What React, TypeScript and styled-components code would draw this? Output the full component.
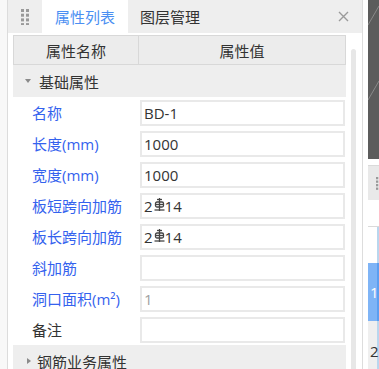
import React from 'react';
import styled, { createGlobalStyle } from 'styled-components';

const GlobalStyle = createGlobalStyle`
  html, body {
    margin: 0;
    padding: 0;
    background: #fff;
  }
  body {
    font-family: "Open Sans", "Noto Sans CJK SC", sans-serif;
  }
`;

const props = [
  { label: '名称', value: 'BD-1' },
  { label: '长度(mm)', value: '1000' },
  { label: '宽度(mm)', value: '1000' },
  { label: '板短跨向加筋', value: '2|14', rebar: true },
  { label: '板长跨向加筋', value: '2|14', rebar: true },
  { label: '斜加筋', value: '' },
  { label: '洞口面积(m²)', value: '1', disabled: true },
  { label: '备注', value: '', plain: true },
];

const GripDots = ({ cols = 2 }: { cols?: number }) => (
  <svg width={cols * 4} height="16" viewBox={`0 0 ${cols * 4} 16`}>
    {Array.from({ length: 4 }).map((_, r) =>
      Array.from({ length: cols }).map((__, c) => (
        <rect key={`${r}-${c}`} x={c * 5} y={r * 4.7} width="3" height="3" fill="#999" />
      ))
    )}
  </svg>
);

// HRB400 rebar symbol
const RebarMark = () => (
  <svg width="11" height="13" viewBox="0 0 11 13" style={{ margin: '0 0 2px 1px' }}>
    <g stroke="#444" strokeWidth="1.3" fill="none">
      <line x1="5.5" y1="0" x2="5.5" y2="13" />
      <line x1="3" y1="1.5" x2="8" y2="1.5" />
      <rect x="1.5" y="4" width="8" height="5" rx="1.5" />
      <line x1="1.5" y1="6.5" x2="9.5" y2="6.5" />
      <line x1="0.5" y1="12" x2="10.5" y2="12" />
    </g>
  </svg>
);

export default function App() {
  return (
    <>
      <GlobalStyle />
      <Screen>
        <LeftRail />
        <Panel>
          <TabBar>
            <Grip>
              <GripDots />
            </Grip>
            <Tab $active>属性列表</Tab>
            <Tab>图层管理</Tab>
            <CloseButton>
              <svg width="11" height="11" viewBox="0 0 11 11">
                <path d="M1 1 L10 10 M10 1 L1 10" stroke="#9a9a9a" strokeWidth="1.4" />
              </svg>
            </CloseButton>
          </TabBar>
          <Body>
            <Table>
              <HeaderRow>
                <HeaderCell>属性名称</HeaderCell>
                <HeaderCell>属性值</HeaderCell>
              </HeaderRow>
              <GroupRow>
                <Caret $open />
                基础属性
              </GroupRow>
              {props.map((p) => (
                <PropRow key={p.label}>
                  <PropLabel $plain={p.plain}>{p.label}</PropLabel>
                  <ValueBox $disabled={p.disabled}>
                    {p.rebar ? (
                      <>
                        2<RebarMark />14
                      </>
                    ) : (
                      p.value
                    )}
                  </ValueBox>
                </PropRow>
              ))}
              <GroupRow>
                <Caret />
                钢筋业务属性
              </GroupRow>
            </Table>
            <ScrollColumn>
              <ScrollTrack />
            </ScrollColumn>
          </Body>
        </Panel>
        <RightPane>
          <DarkCanvas>
            <svg width="11" height="159" viewBox="0 0 11 159">
              <line x1="0" y1="25" x2="11" y2="6" stroke="#8a8a8a" strokeWidth="1" />
              <line x1="0" y1="100" x2="11" y2="81" stroke="#8a8a8a" strokeWidth="1" />
            </svg>
          </DarkCanvas>
          <SubHeader>
            <GripDots cols={1} />
          </SubHeader>
          <SubBlank />
          <GridCell />
          <GridCell $selected>1</GridCell>
          <GridCell $grey>2</GridCell>
        </RightPane>
      </Screen>
    </>
  );
}

const Screen = styled.div`
  display: flex;
  width: 379px;
  height: 369px;
  overflow: hidden;
  background: #fff;
`;

const LeftRail = styled.div`
  width: 7px;
  border-right: 1px solid #dcdcdc;
  background: #f8f8f8;
`;

const Panel = styled.div`
  width: 354px;
  display: flex;
  flex-direction: column;
  border-right: 1px solid #dddddd;
  margin-right: 5px;
`;

const TabBar = styled.div`
  height: 33px;
  display: flex;
  align-items: stretch;
  background: #eeeeee;
  flex-shrink: 0;
`;

const Grip = styled.div`
  width: 34px;
  display: flex;
  align-items: center;
  padding-left: 13px;
  box-sizing: border-box;
`;

const Tab = styled.div<{ $active?: boolean }>`
  display: flex;
  align-items: center;
  justify-content: center;
  padding: 0 12px;
  min-width: ${(p) => (p.$active ? '86px' : 'auto')};
  box-sizing: border-box;
  font-size: 15px;
  color: ${(p) => (p.$active ? '#4b8ff2' : '#333')};
  background: ${(p) => (p.$active ? '#fff' : 'transparent')};
  margin-right: ${(p) => (p.$active ? '0' : '0')};
`;

const CloseButton = styled.div`
  margin-left: auto;
  width: 38px;
  display: flex;
  align-items: center;
  justify-content: center;
`;

const Body = styled.div`
  flex: 1;
  display: flex;
  padding: 2px 0 0 5px;
  min-height: 0;
`;

const Table = styled.div`
  width: 333px;
  display: flex;
  flex-direction: column;
`;

const HeaderRow = styled.div`
  display: grid;
  grid-template-columns: 126px 207px;
  height: 30px;
  flex-shrink: 0;
`;

const HeaderCell = styled.div`
  display: flex;
  align-items: center;
  justify-content: center;
  background: #ececec;
  border: 1px solid #d8d8d8;
  border-left: none;
  font-size: 15px;
  color: #333;
  box-sizing: border-box;
  &:first-child {
    border-left: 1px solid #d8d8d8;
    border-right: 1px solid #d8d8d8;
  }
  &:last-child {
    border-left: none;
  }
`;

const GroupRow = styled.div`
  height: 32px;
  display: flex;
  align-items: center;
  gap: 8px;
  padding-left: 12px;
  background: #eeeeee;
  font-size: 15px;
  color: #333;
  flex-shrink: 0;
`;

const Caret = styled.span<{ $open?: boolean }>`
  width: 0;
  height: 0;
  ${(p) =>
    p.$open
      ? `border-left: 3px solid transparent;
         border-right: 3px solid transparent;
         border-top: 4px solid #8a8a8a;`
      : `border-top: 3.5px solid transparent;
         border-bottom: 3.5px solid transparent;
         border-left: 4px solid #8a8a8a;
         margin-left: 2px;
         margin-right: -2px;`}
`;

const PropRow = styled.div`
  display: grid;
  grid-template-columns: 127px 205px;
  align-items: center;
  height: 31px;
  flex-shrink: 0;
`;

const PropLabel = styled.div<{ $plain?: boolean }>`
  padding-left: 19px;
  font-size: 15px;
  color: ${(p) => (p.$plain ? '#333' : '#3462ee')};
  white-space: nowrap;
`;

const ValueBox = styled.div<{ $disabled?: boolean }>`
  height: 26px;
  box-sizing: border-box;
  border: 2px solid #e9e9e9;
  display: flex;
  align-items: center;
  padding-left: 2px;
  font-size: 15px;
  color: ${(p) => (p.$disabled ? '#a0a0a0' : '#333')};
`;

const ScrollColumn = styled.div`
  width: 16px;
  display: flex;
  padding-top: 14px;
  padding-left: 5px;
  box-sizing: border-box;
`;

const ScrollTrack = styled.div`
  width: 5px;
  flex: 0 0 5px;
  background: #e7e7e7;
  border-radius: 3px 3px 0 0;
`;

const RightPane = styled.div`
  width: 11px;
  display: flex;
  flex-direction: column;
`;

const DarkCanvas = styled.div`
  height: 159px;
  background: #5c5c5c;
  flex-shrink: 0;
  margin-bottom: 6px;
  svg {
    display: block;
  }
`;

const SubHeader = styled.div`
  height: 35px;
  background: #e9e9e9;
  display: flex;
  align-items: center;
  padding-left: 8px;
  flex-shrink: 0;
  border-top: 1px solid #dadada;
  box-sizing: border-box;
  overflow: hidden;
`;

const SubBlank = styled.div`
  height: 26px;
  flex-shrink: 0;
  border-bottom: 1px solid #dadada;
`;

const GridCell = styled.div<{ $selected?: boolean; $grey?: boolean }>`
  height: ${(p) => (p.$selected ? '58px' : p.$grey ? '60px' : '36px')};
  flex-shrink: 0;
  display: flex;
  align-items: center;
  padding-left: 2px;
  box-sizing: border-box;
  font-size: 15px;
  color: ${(p) => (p.$selected ? '#fff' : '#333')};
  background: ${(p) => (p.$selected ? '#7fb4f6' : p.$grey ? '#efefef' : '#fff')};
  border-right: 2px solid ${(p) => (p.$selected ? '#5b9ef0' : '#b9d6ee')};
`;
